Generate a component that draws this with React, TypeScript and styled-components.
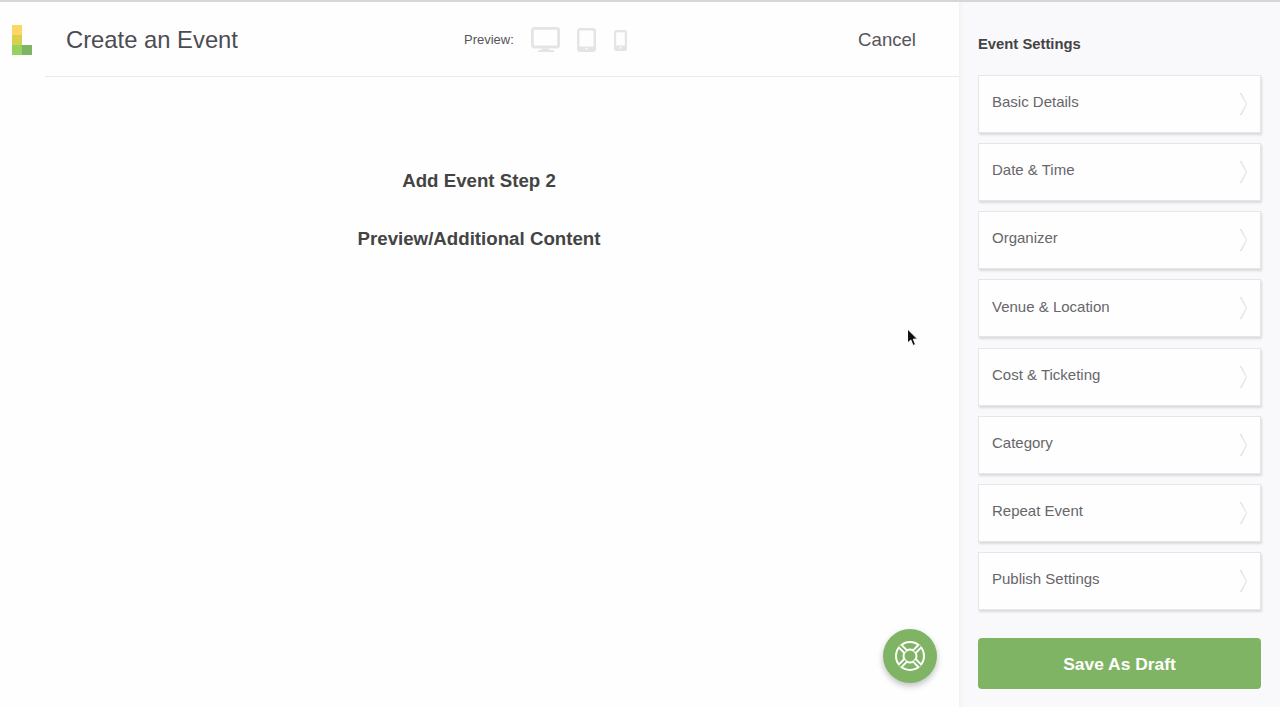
import React from 'react';
import styled, { createGlobalStyle } from 'styled-components';

const GlobalStyle = createGlobalStyle`
  html, body {
    margin: 0;
    padding: 0;
    height: 100%;
    background: #fefefe;
    font-family: "Liberation Sans", Arial, sans-serif;
    overflow: hidden;
  }
`;

const SETTINGS = [
  'Basic Details',
  'Date & Time',
  'Organizer',
  'Venue & Location',
  'Cost & Ticketing',
  'Category',
  'Repeat Event',
  'Publish Settings',
];

const Logo = () => (
  <svg width="20" height="30" viewBox="0 0 20 30">
    <rect x="0" y="0" width="10" height="10" fill="#fdd663" />
    <rect x="0" y="10" width="10" height="10" fill="#d9d04f" />
    <rect x="0" y="20" width="10" height="10" fill="#93d35e" />
    <rect x="10" y="20" width="10" height="10" fill="#80b465" />
  </svg>
);

const DesktopIcon = () => (
  <svg width="29" height="26" viewBox="0 0 29 26">
    <rect x="1.4" y="1.4" width="26.2" height="18.6" rx="2" fill="none" stroke="#e4e4e4" strokeWidth="2.8" />
    <path d="M11 21.4h7l0.6 1.6h3.9l1 2H6.5l1-2h2.9z" fill="#e4e4e4" />
  </svg>
);

const TabletIcon = () => (
  <svg width="19" height="24" viewBox="0 0 19 24">
    <rect x="1.2" y="1.2" width="16.6" height="21.6" rx="2" fill="none" stroke="#e4e4e4" strokeWidth="2.4" />
    <rect x="1" y="18.5" width="17" height="4.5" fill="#e4e4e4" />
    <circle cx="9.5" cy="20.7" r="1" fill="#fefefe" />
  </svg>
);

const PhoneIcon = () => (
  <svg width="14" height="21" viewBox="0 0 14 21">
    <rect x="2.1" y="1.1" width="10.8" height="18.8" rx="1.5" fill="none" stroke="#e4e4e4" strokeWidth="2.2" />
    <rect x="2" y="15.5" width="11" height="4.5" fill="#e4e4e4" />
    <circle cx="7.5" cy="17.7" r="1" fill="#fefefe" />
  </svg>
);

const Chevron = () => (
  <svg width="8" height="24" viewBox="0 0 8 24">
    <path d="M0.6 1 L7 12 L0.8 23 L2.6 23 L8 12 L2.4 1 Z" fill="#e2e2e2" />
  </svg>
);

const LifeRing = () => (
  <svg width="32" height="32" viewBox="0 0 32 32" fill="none" stroke="#fff" strokeWidth="2">
    <circle cx="16" cy="16" r="14" />
    <circle cx="16" cy="16" r="6.5" />
    <path d="M6.1 6.1 L11.4 11.4 M25.9 6.1 L20.6 11.4 M6.1 25.9 L11.4 20.6 M25.9 25.9 L20.6 20.6" strokeWidth="5.6" />
    <path d="M5.6 5.6 L11.4 11.4 M26.4 5.6 L20.6 11.4 M5.6 26.4 L11.4 20.6 M26.4 26.4 L20.6 20.6" stroke="#80b465" strokeWidth="2" />
  </svg>
);

const Pointer = () => (
  <svg width="14" height="20" viewBox="0 0 14 20">
    <path d="M1.5 1 L1.5 15 L4.8 12 L7 17.5 L9.5 16.4 L7.3 11.2 L11.5 11 Z" fill="#111" stroke="#fff" strokeWidth="1" />
  </svg>
);

export default function App() {
  return (
    <>
      <GlobalStyle />
      <Page>
        <Main>
          <TopRow>
            <LogoCell>
              <Logo />
            </LogoCell>
            <Header>
              <Title>Create an Event</Title>
              <PreviewGroup>
                <PreviewLabel>Preview:</PreviewLabel>
                <DesktopIcon />
                <TabletIcon />
                <PhoneIcon />
              </PreviewGroup>
              <CancelLink>Cancel</CancelLink>
            </Header>
          </TopRow>
          <Body>
            <Heading>Add Event Step 2</Heading>
            <Heading>Preview/Additional Content</Heading>
          </Body>
          <CursorMark>
            <Pointer />
          </CursorMark>
          <HelpButton>
            <LifeRing />
          </HelpButton>
        </Main>
        <Sidebar>
          <SidebarTitle>Event Settings</SidebarTitle>
          <CardList>
            {SETTINGS.map((label) => (
              <Card key={label}>
                <CardLabel>{label}</CardLabel>
                <Chevron />
              </Card>
            ))}
          </CardList>
          <SaveButton>Save As Draft</SaveButton>
        </Sidebar>
      </Page>
    </>
  );
}

const Page = styled.div`
  display: flex;
  width: 1280px;
  height: 707px;
  box-sizing: border-box;
  border-top: 2px solid #d6d6d9;
  color: #4a4a4a;
`;

const Main = styled.main`
  position: relative;
  flex: 1;
  display: flex;
  flex-direction: column;
  min-width: 0;
`;

const TopRow = styled.div`
  display: flex;
  height: 75px;
`;

const LogoCell = styled.div`
  width: 45px;
  padding: 23px 0 0 12px;
  box-sizing: border-box;
`;

const Header = styled.header`
  flex: 1;
  display: flex;
  align-items: center;
  padding: 2px 43px 0 21px;
  border-bottom: 1px solid #e9e9f0;
  box-sizing: border-box;
`;

const Title = styled.h1`
  width: 398px;
  margin: 0;
  font-size: 23.8px;
  font-weight: 400;
  color: #4c4c52;
`;

const PreviewGroup = styled.div`
  flex: 1;
  display: flex;
  align-items: center;
  gap: 17px;
`;

const PreviewLabel = styled.span`
  margin-top: -2px;
  font-size: 13px;
  color: #55555a;
`;

const CancelLink = styled.span`
  font-size: 18.6px;
  color: #55555a;
`;

const Body = styled.div`
  display: flex;
  flex-direction: column;
  align-items: center;
  gap: 37px;
  padding-top: 93px;
`;

const Heading = styled.h2`
  margin: 0 1px 0 0;
  font-size: 18.7px;
  line-height: 21px;
  font-weight: 700;
  color: #444;
`;

const CursorMark = styled.div`
  position: absolute;
  left: 906px;
  top: 326px;
`;

const HelpButton = styled.button`
  position: absolute;
  left: 883px;
  top: 627px;
  width: 54px;
  height: 54px;
  padding: 0;
  display: flex;
  align-items: center;
  justify-content: center;
  border: none;
  border-radius: 50%;
  background: #80b465;
  box-shadow: 0 3px 6px rgba(0, 0, 0, 0.25);
`;

const Sidebar = styled.aside`
  width: 321px;
  box-sizing: border-box;
  padding: 0 19px;
  display: flex;
  flex-direction: column;
  background: linear-gradient(90deg, #f7f0e8, #f9f9fb 4px);
`;

const SidebarTitle = styled.h3`
  margin: 34px 0 0;
  font-size: 14.8px;
  line-height: 16px;
  font-weight: 700;
  color: #444;
`;

const CardList = styled.div`
  display: flex;
  flex-direction: column;
  gap: 10.2px;
  margin-top: 22.8px;
`;

const Card = styled.div`
  height: 58px;
  box-sizing: border-box;
  display: flex;
  align-items: center;
  justify-content: space-between;
  padding: 0 13px;
  background: #fefefe;
  border: 1px solid #e6e6ea;
  box-shadow: 1px 2px 2px rgba(0, 0, 0, 0.12);
`;

const CardLabel = styled.span`
  margin-top: -4.6px;
  font-size: 15px;
  color: #66666b;
`;

const SaveButton = styled.button`
  margin-top: 28px;
  height: 51px;
  padding-top: 2px;
  border: none;
  border-radius: 4px;
  background: #80b465;
  color: #fff;
  font-family: inherit;
  font-size: 17.4px;
  font-weight: 700;
`;
